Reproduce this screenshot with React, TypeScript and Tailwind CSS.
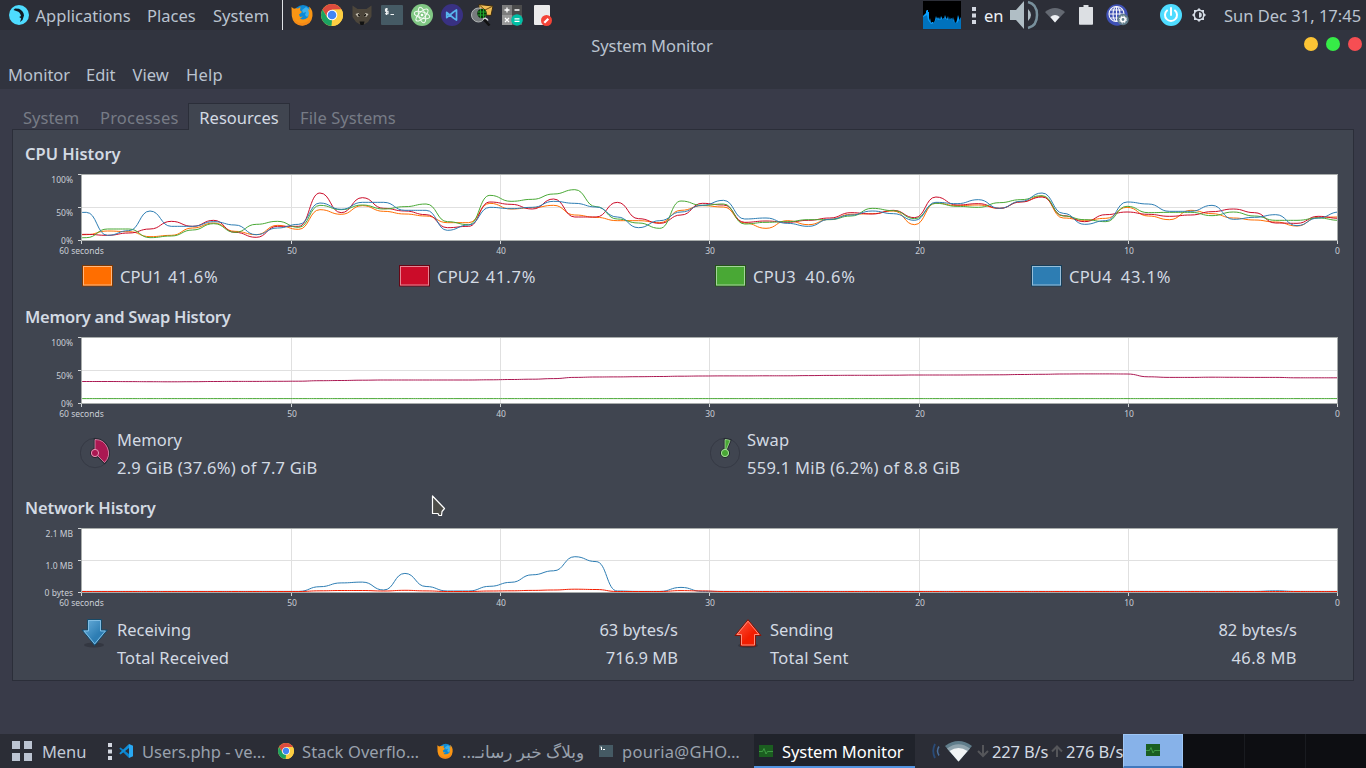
import React from "react";

const X0 = 86.3;
const DX = 21.24;

type Series = { color: string; values: number[] };

/* Values are plotted heights inside a chart, in thirds of a pixel below y = 165. */
const cpu: Series[] = [
  { color: "#ff6e00", values: [209,198,200,215,211,189,174,199,209,181,193,134,148,122,139,147,153,173,173,115,132,128,121,150,157,167,167,173,136,122,126,174,190,167,179,163,148,146,138,179,114,122,120,130,110,94,159,166,160,127,153,164,136,146,159,165,171,183,157,156] },
  { color: "#cb0c29", values: [208,211,204,192,169,184,166,202,217,184,184,84,143,98,130,138,149,188,184,111,118,132,102,156,156,112,161,175,150,115,120,172,168,172,166,159,143,147,136,158,96,120,116,130,111,96,152,170,149,141,148,154,150,140,132,143,174,175,154,160] },
  { color: "#49a835", values: [218,192,192,218,213,195,176,202,178,169,187,121,134,120,132,125,117,170,179,91,109,103,87,74,125,162,174,190,108,121,117,177,172,170,164,164,153,130,137,161,115,124,127,113,104,92,153,164,170,124,143,142,142,152,141,153,166,166,159,166] },
  { color: "#2d7db3", values: [142,211,197,138,184,184,170,180,209,189,178,114,133,112,112,136,136,196,180,127,131,127,109,115,126,156,188,167,141,121,106,162,159,175,184,163,150,138,146,166,112,116,104,130,109,84,145,178,167,111,117,139,139,121,163,157,149,182,159,141] },
].map((s) => ({ color: s.color, values: s.values.map((v) => 165 + v / 3) }));

const memory: Series[] = [
  {
    color: "#ab1852",
    values: [381.5,381.5,381.6,381.7,381.8,381.7,381.5,381.4,381.4,381.3,381.2,380.7,380.5,380.2,380,380,380,380,380,379.8,379.5,379.2,378.6,377.4,377,376.9,376.7,376.5,376.2,376,375.9,375.9,375.8,375.8,375.6,375.4,375.3,375.3,375.2,375,375,375,374.9,374.8,374.5,374.3,374,373.9,373.9,374,376.8,377.4,377.4,377.2,377.3,377.4,377.4,377.8,377.8,377.8],
  },
  { color: "#49a835", values: Array(60).fill(398.6) },
];

const rx = Array(60).fill(591.4);
Object.entries({ 11: 586.7, 12: 582.9, 13: 582.1, 14: 590, 15: 573.4, 16: 586.5, 17: 591, 18: 591, 19: 586.3, 20: 582.3, 21: 574.8, 22: 570.8, 23: 556.7, 24: 561.6, 25: 591, 28: 587.4, 56: 590.8 }).forEach(
  ([i, v]) => (rx[Number(i)] = v)
);
const tx = Array(60).fill(591.5);
Object.entries({ 11: 590.8, 12: 590.5, 13: 590.5, 14: 591, 15: 590.3, 16: 590.9, 19: 591, 20: 590.8, 21: 590.4, 22: 590, 23: 589.2, 24: 589.5, 28: 590.6, 29: 590.9 }).forEach(
  ([i, v]) => (tx[Number(i)] = v)
);
const network: Series[] = [
  { color: "#2d7db3", values: rx },
  { color: "#f21d00", values: tx },
];

function curve(values: number[]) {
  let prev = values[0] + (values[0] < 240 ? 1.5 : 0);
  let d = `M${X0 - DX} ${prev}`;
  values.forEach((v, i) => {
    const x = X0 + DX * i;
    const mid = x - DX / 2;
    d += `C${mid.toFixed(1)} ${prev} ${mid.toFixed(1)} ${v} ${x.toFixed(1)} ${v}`;
    prev = v;
  });
  return d;
}

const ticks = [
  { x: 81, label: "60 seconds" },
  { x: 291.5, label: "50" },
  { x: 500.5, label: "40" },
  { x: 709.5, label: "30" },
  { x: 919.5, label: "20" },
  { x: 1128.5, label: "10" },
  { x: 1337, label: "0" },
];

function Chart({ id, top, height, plotTop, plotBottom, labels, series }: {
  id: string; top: number; height: number; plotTop: number; plotBottom: number; labels: string[]; series: Series[];
}) {
  const mid = Math.round((plotTop + plotBottom) / 2) - 0.5;
  return (
    <svg className="block shrink-0" width={1340} height={height} viewBox={`13 ${top} 1340 ${height}`}>
      <defs>
        <clipPath id={id}>
          <rect x={81} y={plotTop} width={1256.5} height={plotBottom - plotTop} />
        </clipPath>
      </defs>
      <rect x={81.5} y={plotTop} width={1256} height={plotBottom - plotTop} fill="#fff" />
      <path d={`M82 ${mid}H1337`} stroke="#e0e0e0" />
      {ticks.slice(1, 6).map((t) => (
        <path key={t.x} d={`M${t.x} ${plotTop}V${plotBottom}`} stroke="#e0e0e0" />
      ))}
      <g clipPath={`url(#${id})`} fill="none" strokeWidth={1}>
        {series.map((s, i) => (
          <path key={i} d={curve(s.values)} stroke={s.color} />
        ))}
      </g>
      <rect x={81.5} y={plotTop} width={1256} height={plotBottom - plotTop} fill="none" stroke="#a9adac" />
      <path d={`M78 ${plotTop}h3M78 ${mid}h3M78 ${plotBottom}h3`} stroke="#d0d3d5" />
      {ticks.map((t) => (
        <path key={t.x} d={`M${t.x === 81 || t.x === 1337 ? t.x + 0.5 : t.x} ${plotBottom + 0.5}v3`} stroke="#d0d3d5" />
      ))}
      <g fill="#c9cdd5" fontSize={8.5}>
        {[plotTop + 8.5, mid + 8.5, plotBottom + 3.6].map((y, i) => (
          <text key={i} x={73} y={y} textAnchor="end">{labels[i]}</text>
        ))}
        {ticks.map((t) => (
          <text key={t.x} x={t.x + 0.5} y={plotBottom + 13.5} textAnchor="middle">{t.label}</text>
        ))}
      </g>
    </svg>
  );
}

function Firefox({ size }: { size: number }) {
  return (
    <svg width={size} height={size} viewBox="0 0 22 22">
      <circle cx="12" cy="9.7" r="8.8" fill="#0d8ad6" />
      <path d="M15 3l3 2 1 5-3 3-2-2 1-3-3 1-1-3z" fill="#3fb1ea" />
      <path d="M.5 3L3 4.7Q4.500 3.800 7 4.500L9.500 3 9 6.300l2 1.700-3 2.500 1 2.500 3-.5-3 2.300q4 2.200 8-1.500l1-4-1-4 1.500 1-.3-3.800Q22 6 21.500 12q-1 9-10 9.700Q2 21.500 .8 12z" fill="#fa9614" />
      <path d="M2 14q4 6 10 5 5-.5 8-5-1 7-9 7.700Q4 21 2 14z" fill="#f07e1b" opacity=".6" />
    </svg>
  );
}

function Chrome({ size }: { size: number }) {
  return (
    <svg width={size} height={size} viewBox="0 0 22 22">
      <circle cx="11" cy="11" r="11" fill="#fdce42" />
      <path d="M1.500 5.500A11 11 0 0 1 20.500 5.500L11 6 6.500 13.500z" fill="#dd4b3e" />
      <path d="M1.500 5.500L6.200 13.500 11 16 10.500 22A11 11 0 0 1 1.500 5.500z" fill="#1ba261" />
      <path d="M20.500 5.500H11l4.800 8L10.500 22A11 11 0 0 0 20.500 5.500z" fill="#fdce42" />
      <circle cx="11" cy="11" r="5.300" fill="#fff" />
      <circle cx="11" cy="11" r="4.300" fill="#4285f4" />
    </svg>
  );
}

function Dots() {
  return (
    <svg width="4" height="17" viewBox="0 0 4 17" fill="#d3d7e0">
      <path d="M0 0h4v4H0zM0 6.500h4v4H0zM0 13h4v4H0z" />
    </svg>
  );
}

function Pulse() {
  return (
    <svg className="block" width="14" height="12" viewBox="0 0 14 12">
      <path fill="#1b5e20" d="M0 0h14v12H0z" />
      <path d="M0 6.500h3.500l1.500-3 2 5.500 1.500-2.500H14" fill="none" stroke="#43a047" strokeWidth=".9" />
    </svg>
  );
}

function Slot({ className, children }: { className: string; children?: React.ReactNode }) {
  return <div className={`flex shrink-0 items-center whitespace-nowrap ${className}`}>{children}</div>;
}

function TopPanel() {
  return (
    <header className="flex h-[30px] items-center bg-[#2c2e37] text-[#bac3cf]">
      <Slot className="w-[27px] pl-2">
        <svg className="shrink-0" width="22" height="22" viewBox="0 0 22 22">
          <circle cx="11" cy="11" r="10" fill="#4edcff" />
          <path d="M7 4.500l4 .2q4.500 2 5 6.800l-1.500 4.500-2.500 2 1.200-3.500-2-1.500 1.800-1q-1-4-4-4.800L5.500 6z" fill="#101a22" />
        </svg>
      </Slot>
      <Slot className="w-[120px] pl-[8.500px] pt-[2px] tracking-[0.03px]">Applications</Slot>
      <Slot className="w-[66px] pt-[2px]">Places</Slot>
      <Slot className="w-[69px] pt-[2px]">System</Slot>
      <div className="h-full w-px bg-[#dfe2e6]" />
      <Slot className="w-[272px] gap-[8px] pl-[8px]">
        <Firefox size={22} />
        <Chrome size={22} />
        <svg width="22" height="22" viewBox="0 0 22 22">
          <path d="M1.500 1.500L6.500 5h9l5-3.500v11L17 18l-4 2.500h-4L5 18l-3.500-5z" fill="#4d463b" />
          <path d="M4.500 10l3-1 2 3-3 .7zM17.500 10l-3-1-2 3 3 .7z" fill="#c9c2b4" />
          <path d="M7 10.500l2 1.300M15 10.500l-2 1.300" stroke="#17140f" strokeWidth="1.600" />
          <path d="M8.500 17.500h5L12.500 21h-3z" fill="#121212" />
        </svg>
        <svg width="22" height="22" viewBox="0 0 22 22">
          <rect y="1" width="22" height="20" rx="1" fill="#455a64" />
          <path d="M7 5H4.500v2.300H7v2.400H4M5.600 4v7M9.500 10.500H13" fill="none" stroke="#f2f5f6" strokeWidth="1.100" />
        </svg>
        <svg width="22" height="22" viewBox="0 0 22 22">
          <circle cx="11" cy="11" r="11" fill="#81c784" />
          <g fill="none" stroke="#f4fbf4" strokeWidth="1">
            <ellipse cx="11" cy="11" rx="8" ry="3.200" transform="rotate(15 11 11)" />
            <ellipse cx="11" cy="11" rx="8" ry="3.200" transform="rotate(75 11 11)" />
            <ellipse cx="11" cy="11" rx="8" ry="3.200" transform="rotate(135 11 11)" />
          </g>
          <circle cx="11" cy="11" r="1.300" fill="#fff" />
        </svg>
        <svg width="22" height="22" viewBox="0 0 22 22">
          <circle cx="11" cy="11" r="11" fill="#393182" />
          <path d="M12.500 8L15.500 5.900v10.200L12.500 14 5.700 8.400v5.200L12.500 8" fill="none" stroke="#58b5ee" strokeWidth="1.700" strokeLinejoin="round" />
        </svg>
        <svg width="22" height="22" viewBox="0 0 22 22">
          <path d="M8 .5l14 1.500-2 9.500-12-1z" fill="#efbd55" stroke="#3a2a10" />
          <path d="M9 1.500l5 4.500 7-3.500" fill="none" stroke="#6b4b14" />
          <circle cx="7.500" cy="11" r="7" fill="#777b7d" stroke="#b2b5b5" />
          <circle cx="11" cy="9.500" r="4.800" fill="#0b350c" />
          <path d="M7 8h8M7 11h8M9.500 5v9M12.500 5v9" stroke="#20a32b" />
          <path d="M12 15.500q3-2.500 5 1" stroke="#dcdcdc" fill="none" strokeWidth="1.500" />
          <path d="M13 15.500l5.500 6" stroke="#111" strokeWidth="2.500" />
        </svg>
        <svg width="22" height="22" viewBox="0 0 22 22">
          <path fill="#7c7c7c" d="M1 1h10v10H1z" /><path fill="#4b4b4b" d="M11 1h10v10H11z" />
          <path fill="#999" d="M1 11h10v10H1z" /><path fill="#606060" d="M11 11h10v10H11z" />
          <path d="M3.500 6h5M6 3.500v5M13.500 6h5M4 14l4 4M8 14l-4 4" stroke="#fff" strokeWidth="1.300" />
          <circle cx="16" cy="16" r="5.800" fill="#00bfa5" />
          <path d="M13.500 14.800h5M13.500 17.300h5" stroke="#fff" strokeWidth="1.300" />
        </svg>
        <svg width="22" height="22" viewBox="0 0 22 22">
          <rect x="3" y="1" width="16" height="20" rx="1" fill="#ebebeb" />
          <circle cx="15.500" cy="16.500" r="5.500" fill="#f44336" />
          <path d="M13.300 18.700l4-4" stroke="#fff" strokeWidth="2.200" />
        </svg>
      </Slot>
      <div className="grow" />
      <Slot className="w-[49px]">
        <svg width="38" height="28" viewBox="0 0 38 28">
          <path fill="#000" d="M0 0h38v28H0z" />
          <path fill="#0aa0ff" d="M0 28V15l2-2 1-1V10l1-1h1v2h1v9l1-3 1 5 1-1h1l1 1 1-3 1-4 1 3 1-2 1 2v-2l1 3 1-4 1 2v3l1-3 1 1 1-4 1 3 1 1 1-3 1 5 1-4 1 7v-3l1 1 1-5 1 4v-2l1 5 1-1 1-3 1-5 1 3V28z" />
          <path fill="#0072bd" d="M0 28V16l4-2 1 5 3 4 3-1 2-4 4 1 4-2 4 2 4-2 2 4 3 1 4-6V28z" />
        </svg>
      </Slot>
      <Slot className="w-[12px]"><Dots /></Slot>
      <Slot className="w-[26px] pt-[2px] text-[#eef1f5]">en</Slot>
      <Slot className="w-[35px]">
        <svg width="30" height="30" viewBox="0 0 30 30">
          <path d="M0 10h6l8-9v28l-8-9H0z" fill="#b0bec5" />
          <path d="M18 9q6 6 0 12z" fill="#b0bec5" />
          <path d="M18 2q9 2 9 13t-9 13" fill="none" stroke="#78909c" strokeWidth="2.500" />
        </svg>
      </Slot>
      <Slot className="w-[33px]">
        <svg width="20" height="15" viewBox="0 0 20 15">
          <path d="M0 4Q10-4 20 4L10 14.500z" fill="#646972" />
          <path d="M5.300 9q4.700-4 9.400 0L10 14.500z" fill="#eef0f3" />
        </svg>
      </Slot>
      <Slot className="w-[28px]">
        <svg width="16" height="20" viewBox="0 0 16 20"><path d="M5.500 0h5v2h4q.500 0 .500.600V19q0 .800-.800.800H1.800Q1 19.800 1 19V2.600Q1 2 1.600 2h3.900z" fill="#dcdfe3" /></svg>
      </Slot>
      <Slot className="w-[54px]">
        <svg width="24" height="24" viewBox="0 0 24 24">
          <circle cx="11" cy="12" r="10.700" fill="#3f51b5" />
          <g fill="none" stroke="#f5f6fa" strokeWidth="1.100">
            <circle cx="10.500" cy="11" r="7.500" /><ellipse cx="10.500" cy="11" rx="3.500" ry="7.500" />
            <path d="M10.500 3.500v15M3 11h15M4.500 7h12M4.500 15h12" />
          </g>
          <circle cx="17" cy="16.500" r="5.700" fill="#607d8b" />
          <circle cx="17" cy="16.500" r="2.200" fill="none" stroke="#fff" strokeWidth="1.600" />
          <circle cx="17" cy="16.500" r="3.500" fill="none" stroke="#fff" strokeDasharray="1.400 1.350" />
        </svg>
      </Slot>
      <Slot className="w-[32px]">
        <svg width="22" height="22" viewBox="0 0 22 22">
          <circle cx="11" cy="11" r="11" fill="#4edcff" />
          <path d="M7 6.500a6 6 0 1 0 8 0M11 4v7" fill="none" stroke="#fff" strokeWidth="2" strokeLinecap="round" />
        </svg>
      </Slot>
      <Slot className="w-[32px]">
        <svg width="14" height="14" viewBox="0 0 14 14">
          <path d="M7 0l2 2h3v3l2 2-2 2v3H9l-2 2-2-2H2V9L0 7l2-2V2h3z" fill="#d3dae3" />
          <circle cx="7" cy="7" r="4" fill="#2c2e37" />
          <path d="M7 4.200a2.800 2.800 0 0 1 0 5.600z" fill="#d3dae3" />
        </svg>
      </Slot>
      <Slot className="w-[142px] pt-[2px]">Sun Dec 31, 17:45</Slot>
    </header>
  );
}

function TitleBar() {
  return (
    <div className="grid h-[31px] grid-cols-3 items-center bg-[#31343f] text-[#bac3cf]">
      <span />
      <span className="justify-self-center pr-[62px] pt-px tracking-[-0.07px]">System Monitor</span>
      <div className="flex gap-2 justify-self-end pr-[4px] pb-[3px]">
        <span className="size-[14px] rounded-full bg-[#fcc435]" />
        <span className="size-[14px] rounded-full bg-[#36ec47]" />
        <span className="size-[14px] rounded-full bg-[#f64e53]" />
      </div>
    </div>
  );
}

function Swatch({ fill, edge, inner, label, value, labelClass }: {
  fill: string; edge: string; inner: string; label: string; value: string; labelClass: string;
}) {
  return (
    <div className="flex items-center">
      <svg className="relative -top-px mr-[7px] shrink-0" width="31" height="22" viewBox="0 0 31 22">
        <rect x=".5" y=".5" width="30" height="20.500" fill={fill} stroke={edge} />
        <rect x="1.500" y="1.500" width="28" height="18.500" fill="none" stroke={inner} />
      </svg>
      <span className={labelClass}>{label}</span>
      <span className="tracking-[0.85px]">{value}</span>
    </div>
  );
}

function Pie({ color, light, slice }: { color: string; light: string; slice: string }) {
  return (
    <svg className="block" width="30" height="32" viewBox="0 0 30 32">
      <circle cx="15" cy="16" r="14.700" fill="none" stroke="#353944" />
      <path d={slice} fill={color} stroke="#22252d" strokeWidth="2.500" />
      <circle cx="15" cy="16" r="4.500" fill={color} stroke="#22252d" />
      <path d={slice} fill={color} stroke={light} strokeWidth=".8" />
      <circle cx="15" cy="16" r="3.600" fill={color} stroke={light} />
    </svg>
  );
}

function Arrow({ up }: { up?: boolean }) {
  const id = up ? "arrow-up" : "arrow-down";
  return (
    <svg className="block" width="28" height="30" viewBox="0 0 28 30">
      <defs>
        <linearGradient id={id} x1="0" y1="0" x2="1" y2="1">
          <stop offset="0" stopColor={up ? "#ff5b47" : "#6eb3df"} />
          <stop offset=".6" stopColor={up ? "#f21d00" : "#2d7db3"} />
        </linearGradient>
      </defs>
      <ellipse cx="14" cy={up ? 26.500 : 26} rx="10" ry="2.500" fill="#2c3039" opacity=".65" />
      {up ? (
        <>
          <path d="M14 .7L27 16.500h-5.500V27h-15V16.500H1z" fill={`url(#${id})`} stroke="#8b1305" />
          <path d="M14 2.200L25 15.500h-4.500V26h-13V15.500H3z" fill="none" stroke="#ff8e7b" />
        </>
      ) : (
        <>
          <path d="M7.500.5h14v10.500H27.400L14.700 26.500 2 11h5.500z" fill={`url(#${id})`} stroke="#174967" />
          <path d="M8.500 1.500h12V12h4.900L14.700 24.900 4 12h4.500z" fill="none" stroke="#80bde3" />
        </>
      )}
    </svg>
  );
}

function Resources() {
  return (
    <section className="h-[552px] w-[1342px] border border-[#2b2e39] bg-[#404550] text-[#d3dae3]">
      <h2 className="flex h-10 items-center pl-3 pt-2 font-semibold">CPU History</h2>
      <Chart id="cpu" top={170} height={88} plotTop={174.5} plotBottom={240.5} labels={["100%", "50%", "0%"]} series={cpu} />
      <div className="grid h-[38px] grid-cols-[317px_316px_316px_270px] pl-[69px]">
        <Swatch fill="#ff6e00" edge="#7b3906" inner="#ffb77f" label="CPU1" value="41.6%" labelClass="mr-[6px]" />
        <Swatch fill="#cb0c29" edge="#660615" inner="#e58594" label="CPU2" value="41.7%" labelClass="mr-[6px] tracking-[0.2px]" />
        <Swatch fill="#49a835" edge="#24541a" inner="#a4d39a" label="CPU3" value="40.6%" labelClass="mr-[9px] tracking-[0.3px]" />
        <Swatch fill="#2d7db3" edge="#173e59" inner="#96bed9" label="CPU4" value="43.1%" labelClass="mr-[9px] tracking-[0.2px]" />
      </div>
      <h2 className="flex h-[37px] items-center pl-3 pt-[5px] font-semibold tracking-[-0.27px]">Memory and Swap History</h2>
      <Chart id="memory" top={333} height={88} plotTop={337.5} plotBottom={403.5} labels={["100%", "50%", "0%"]} series={memory} />
      <div className="flex h-[61px] pl-[67px] pt-[5px] leading-7">
        <div className="flex w-[630px]">
          <div className="mr-[7px] pt-[11px]"><Pie color="#ab1852" light="#e398b7" slice="M15 16V2.500A13.500 13.500 0 0 1 24.500 25.600Z" /></div>
          <div><p>Memory</p><p className="tracking-[0.25px]">2.9 GiB (37.6%) of 7.7 GiB</p></div>
        </div>
        <div className="flex">
          <div className="mr-[7px] pt-[11px]"><Pie color="#49a835" light="#a9dd9e" slice="M15 16V2.500A13.500 13.500 0 0 1 20.100 3.500Z" /></div>
          <div><p className="tracking-[0.2px]">Swap</p><p className="tracking-[0.25px]">559.1 MiB (6.2%) of 8.8 GiB</p></div>
        </div>
      </div>
      <h2 className="flex h-[42px] items-center pl-3 pt-[10px] font-semibold tracking-[-0.14px]">
        Network History
        <svg className="relative -top-[2px] left-[275px]" width="15" height="22" viewBox="0 0 15 22">
          <path d="M1.500 1v17.500h5.500l1 2h2.500l.500-4 2.500-3z" fill="#4c4c48" stroke="#fff" strokeWidth="1.200" strokeLinejoin="round" />
        </svg>
      </h2>
      <Chart id="network" top={524} height={87} plotTop={528.5} plotBottom={592.5} labels={["2.1 MB", "1.0 MB", "0 bytes"]} series={network} />
      <div className="flex pl-[67px] pt-[5px] leading-7">
        <div className="mr-[9px] pt-[3px]"><Arrow /></div>
        <div className="flex w-[561px] justify-between">
          <div><p>Receiving</p><p className="tracking-[0.1px]">Total Received</p></div>
          <div className="text-right"><p>63 bytes/s</p><p>716.9 MB</p></div>
        </div>
        <div className="ml-[56px] mr-[8px] pt-[3px]"><Arrow up /></div>
        <div className="flex w-[527px] justify-between">
          <div><p>Sending</p><p className="tracking-[0.25px]">Total Sent</p></div>
          <div className="text-right"><p>82 bytes/s</p><p className="tracking-[0.4px]">46.8 MB</p></div>
        </div>
      </div>
    </section>
  );
}

function Taskbar() {
  return (
    <footer className="flex h-[34px] items-center bg-[#2b2d36] text-[#99a1ad]">
      <Slot className="w-[42px] pl-3">
        <svg width="20" height="20" viewBox="0 0 20 20"><path fill="#bcc4d2" d="M0 0h8v8H0zM12 0h8v8h-8zM0 12h8v8H0zM12 12h8v8h-8z" /></svg>
      </Slot>
      <Slot className="w-[66px] pt-[2px] tracking-[-0.1px] text-[#c2cad6]">Menu</Slot>
      <Slot className="w-[11px]"><Dots /></Slot>
      <Slot className="w-[23px]">
        <svg width="14" height="14" viewBox="0 0 14 14">
          <path d="M10 0v14L.3 4.600l1.200-1.200L10 10z" fill="#0b82cc" />
          <path d="M10 0L.3 9.200l1.200 1.300L10 4z" fill="#118fd9" />
          <path d="M10 0l4 1.800v10.400L10 14z" fill="#29a8f2" />
        </svg>
      </Slot>
      <Slot className="w-[136px] pt-[2px]">Users.php - ve…</Slot>
      <Slot className="w-[24px]"><Chrome size={16} /></Slot>
      <Slot className="w-[135px] pt-[2px] tracking-[0.1px]">Stack Overflo…</Slot>
      <Slot className="w-[25px]"><Firefox size={16} /></Slot>
      <Slot className="w-[137px] pt-[2px] text-[16.900px]"><span dir="rtl">وبلاگ خبر رسانـ…</span></Slot>
      <Slot className="w-[23px]">
        <svg width="14" height="12" viewBox="0 0 14 12"><path fill="#455a64" d="M0 0h14v12H0z" /><path d="M1.500 2h1v3M4 4.500h2" stroke="#fff" fill="none" /></svg>
      </Slot>
      <Slot className="w-[132px] pt-[2px] tracking-[0.28px]">pouria@GHO…</Slot>
      <Slot className="h-full w-[161px] border-b-2 border-[#5294e2] bg-[#20232b] pl-[5px] text-white">
        <div className="pt-[2px]"><Pulse /></div>
        <span className="pl-[9px] pt-[4px] tracking-[-0.07px]">System Monitor</span>
      </Slot>
      <Slot className="w-[30px] pl-[17px]">
        <svg width="10" height="18" viewBox="0 0 10 18" fill="none">
          <path d="M3 2q-3.500 7 0 14" stroke="#294b78" strokeWidth="1.800" /><path d="M7 4.500q-3 4.500 0 9" stroke="#4a6f9c" strokeWidth="1.500" />
        </svg>
      </Slot>
      <Slot className="w-[32px]">
        <svg width="27" height="21" viewBox="0 0 27 21">
          <path d="M0 5Q13.500-5 27 5L13.500 20.500z" fill="#607d8b" />
          <path d="M2 7.500Q13.500-1 25 7.500L13.500 20.500z" fill="#90a4ae" />
          <path d="M4.500 10Q13.500 4 22.500 10l-9 10.500z" fill="#f1f4f5" />
        </svg>
      </Slot>
      <Slot className="w-[15px]">
        <svg width="12" height="13" viewBox="0 0 12 13"><path d="M6 0v11M1 6l5 5 5-5" stroke="#55565a" strokeWidth="2" fill="none" /></svg>
      </Slot>
      <Slot className="w-[59px] pt-[2px] tracking-[-0.15px] text-[#d3dae3]">227 B/s</Slot>
      <Slot className="w-[15px]">
        <svg width="12" height="13" viewBox="0 0 12 13"><path d="M6 12V1M1 6.500l5-5 5 5" stroke="#55565a" strokeWidth="2" fill="none" /></svg>
      </Slot>
      <Slot className="w-[57px] pt-[2px] text-[#d3dae3]">276 B/s</Slot>
      <div className="flex h-full w-[243px] shrink-0 bg-[#0d0e12]">
        <div className="flex w-[60px] items-center justify-center border border-b-2 border-[#9ec6f5] border-b-[#4178bd] bg-[#87b2e9] pb-px"><Pulse /></div>
        <div className="w-[62px] border-r border-[#191b20]" />
        <div className="w-[61px] border-r border-[#191b20]" />
      </div>
    </footer>
  );
}

export default function App() {
  return (
    <div className="flex h-[768px] w-[1366px] flex-col overflow-hidden bg-[#393b49] font-['Noto_Sans','DejaVu_Sans',sans-serif] text-[16.5px] leading-6">
      <TopPanel />
      <TitleBar />
      <nav className="flex h-[28px] items-center bg-[#31343f] text-[#bac3cf]">
        <Slot className="w-[86px] pl-2">Monitor</Slot>
        <Slot className="w-[46px]">Edit</Slot>
        <Slot className="w-[54px] pl-[0.500px]">View</Slot>
        <Slot className="tracking-[0.2px]">Help</Slot>
      </nav>
      <main className="flex h-[645px] flex-col pl-3 pt-[14px]">
        <div className="-mb-px flex h-[27px] shrink-0 text-[#777b86]">
          <Slot className="w-[88px] pl-[11px] pt-[3px]">System</Slot>
          <Slot className="w-[88px] pt-[3px] tracking-[0.2px]">Processes</Slot>
          <Slot className="z-10 w-[102px] justify-center border border-b-0 border-[#2b2e39] bg-[#404550] pt-[2px] text-[#d3dae3]">Resources</Slot>
          <Slot className="pl-[10px] pt-[3px] tracking-[0.1px]">File Systems</Slot>
        </div>
        <Resources />
      </main>
      <Taskbar />
    </div>
  );
}
